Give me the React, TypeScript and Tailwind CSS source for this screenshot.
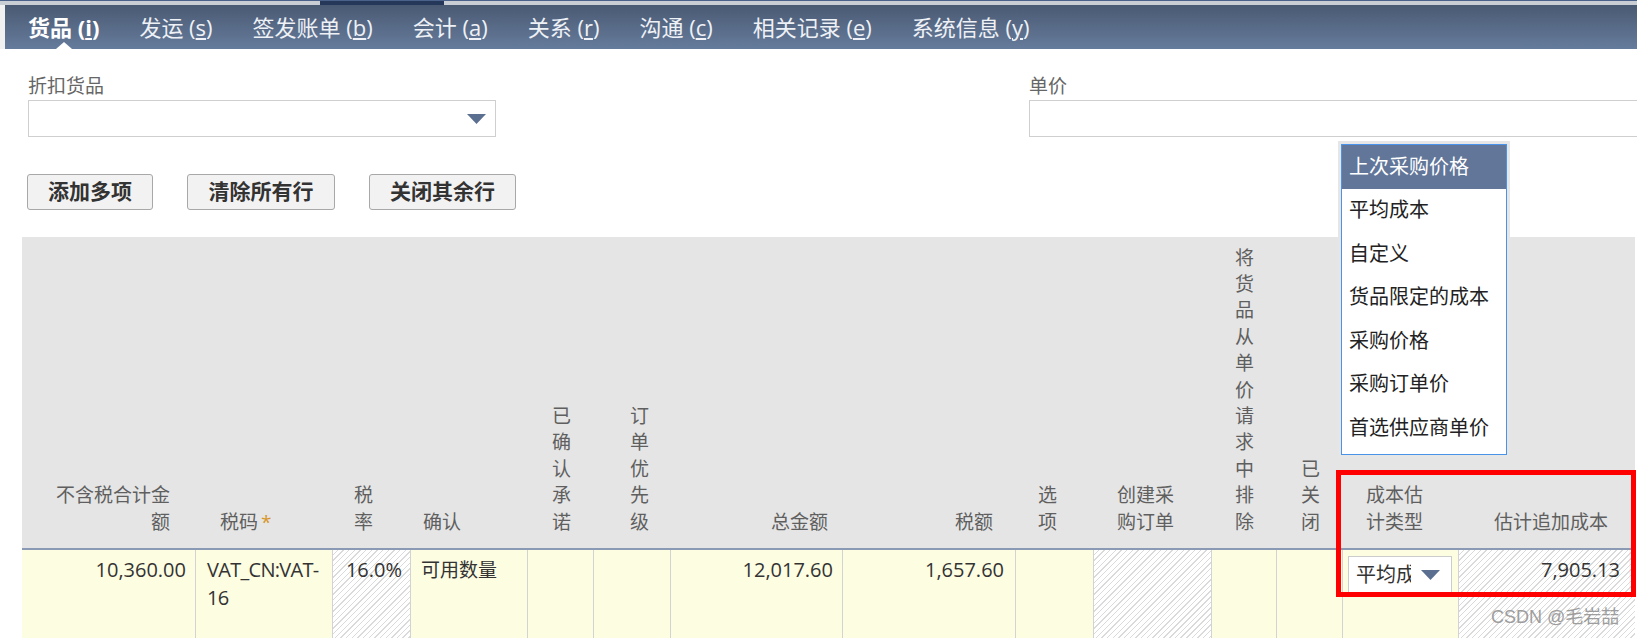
import { FC } from "react";

const tabs = [
  { label: "货品", key: "i", active: true },
  { label: "发运", key: "s" },
  { label: "签发账单", key: "b" },
  { label: "会计", key: "a" },
  { label: "关系", key: "r" },
  { label: "沟通", key: "c" },
  { label: "相关记录", key: "e" },
  { label: "系统信息", key: "y" },
];

const HATCH =
  "bg-[image:repeating-linear-gradient(135deg,#ffffff_0px,#ffffff_3px,#dadada_3px,#dadada_4px)]";

// header lines are broken by hand, the way the form renders them
const columns = [
  { lines: ["不含税合计金", "额"], cls: "items-end pr-[25px] text-right" },
  { lines: ["税码"], cls: "items-start pl-[25px]", req: true },
  { lines: ["税", "率"], cls: "items-start pl-[22px]" },
  { lines: ["确认"], cls: "items-start pl-[13px]" },
  { lines: ["已", "确", "认", "承", "诺"], cls: "items-start pl-[25px]" },
  { lines: ["订", "单", "优", "先", "级"], cls: "items-start pl-[37px]" },
  { lines: ["总金额"], cls: "items-end pr-[14px]" },
  { lines: ["税额"], cls: "items-end pr-[22px]" },
  { lines: ["选", "项"], cls: "items-start pl-[23px]" },
  { lines: ["创建采", "购订单"], cls: "items-start pl-[24px]" },
  {
    lines: ["将", "货", "品", "从", "单", "价", "请", "求", "中", "排", "除"],
    cls: "items-start pl-[24px]",
  },
  { lines: ["已", "关", "闭"], cls: "items-start pl-[25px]" },
  { lines: ["成本估", "计类型"], cls: "items-start pl-[24px]" },
  { lines: ["估计追加成本"], cls: "items-end pr-[27px]" },
];

const costTypes = [
  "上次采购价格",
  "平均成本",
  "自定义",
  "货品限定的成本",
  "采购价格",
  "采购订单价",
  "首选供应商单价",
];

const Caret = ({ className }: { className?: string }) => (
  <svg width="19" height="10" viewBox="0 0 19 10" className={className}>
    <path d="M0 0 H19 L9.5 10 Z" fill="#5b6f90" />
  </svg>
);

const Cell: FC<{ className?: string; children?: React.ReactNode }> = ({ className = "", children }) => (
  <div className={`h-[90px] border-l border-[#d3d3d3] pt-[6px] ${className}`}>{children}</div>
);

export default function App() {
  return (
    <div className="relative h-[638px] w-[1637px] overflow-hidden bg-white font-['Open_Sans','Noto_Sans_CJK_SC',sans-serif]">
      {/* browser strip above the subtabs */}
      <div className="flex h-[5px] border-t border-[#4a628a] bg-[#c9cdd4]">
        <div className="w-[320px]" />
        <div className="h-[4px] w-[124px] bg-[#25385a]" />
      </div>

      {/* subtab bar */}
      <div className="flex bg-[#f1f1f1] pl-[5px]">
        <div className="flex h-[44px] flex-1 items-stretch gap-[40px] bg-linear-to-b from-[#4a5a73] to-[#667c9c] pl-[23px]">
          {tabs.map((t) => (
            <div
              key={t.key}
              className={`relative flex items-center text-[22px] ${
                t.active ? "font-bold text-white" : "text-[#eef1f6]"
              }`}
            >
              <span>
                {t.label} (<u>{t.key}</u>)
              </span>
              {t.active && (
                <div className="absolute bottom-0 left-1/2 h-0 w-0 -translate-x-1/2 border-x-[8px] border-b-[7px] border-x-transparent border-b-white" />
              )}
            </div>
          ))}
        </div>
      </div>

      {/* fields */}
      <div className="mt-[24px] flex pl-[28px]">
        <div className="w-[468px] shrink-0">
          <div className="text-[19px] leading-[26px] text-[#666]">折扣货品</div>
          <div className="mt-px flex h-[37px] items-center justify-end border border-[#cfcfcf] pr-[9px]">
            <Caret />
          </div>
        </div>
        <div className="ml-[533px] w-[700px] shrink-0">
          <div className="text-[19px] leading-[26px] text-[#666]">单价</div>
          <div className="mt-px h-[37px] border border-[#cfcfcf]" />
        </div>
      </div>

      {/* machine buttons */}
      <div className="mt-[37px] flex gap-[34px] pl-[27px]">
        <button className="h-[36px] w-[126px] rounded-[3px] border border-[#a8a8a8] bg-[#f2f2f2] text-[21px] font-bold text-[#333]">
          添加多项
        </button>
        <button className="h-[36px] w-[148px] rounded-[3px] border border-[#a8a8a8] bg-[#f2f2f2] text-[21px] font-bold text-[#333]">
          清除所有行
        </button>
        <button className="h-[36px] w-[147px] rounded-[3px] border border-[#a8a8a8] bg-[#f2f2f2] text-[21px] font-bold text-[#333]">
          关闭其余行
        </button>
      </div>

      {/* item sublist */}
      <div className="ml-[22px] mt-[27px] w-[1613px]">
        <div className="grid h-[311px] grid-cols-[173px_137px_78px_117px_66px_77px_172px_173px_78px_118px_65px_66px_116px_177px] bg-[#e5e5e5]">
          {columns.map((c, i) => (
            <div
              key={i}
              className={`flex flex-col justify-end pb-[13px] text-[19px] leading-[26.4px] text-[#5f5f5f] ${c.cls}`}
            >
              {c.lines.map((l, j) => (
                <span key={j} className="whitespace-nowrap">
                  {l}
                  {c.req && <span className="ml-[3px] align-top text-[#d8962a]">*</span>}
                </span>
              ))}
            </div>
          ))}
        </div>

        <div className="grid grid-cols-[173px_137px_78px_117px_66px_77px_172px_173px_78px_118px_65px_66px_116px_177px] border-t-2 border-[#8a9ab4] bg-[#fdfde2] text-[20px] leading-[28px] text-[#333]">
          <div className="h-[90px] pr-[9px] pt-[6px] text-right">10,360.00</div>
          <Cell className="pl-[11px] tracking-[-0.7px]">
            VAT_CN:VAT-
            <br />
            16
          </Cell>
          <Cell className={`pr-[8px] text-right ${HATCH}`}>16.0%</Cell>
          <Cell className="pl-[10px] text-[19px]">可用数量</Cell>
          <Cell />
          <Cell />
          <Cell className="pr-[9px] text-right">12,017.60</Cell>
          <Cell className="pr-[11px] text-right">1,657.60</Cell>
          <Cell />
          <Cell className={HATCH} />
          <Cell />
          <Cell />
          <Cell className="pl-[5px] pt-[6px]">
            <div className="flex h-[37px] w-[104px] items-center border border-[#cccccc] bg-white">
              <span className="ml-[7px] w-[55px] overflow-hidden whitespace-nowrap">平均成本</span>
              <Caret className="ml-[10px]" />
            </div>
          </Cell>
          <Cell className={`pr-[15px] text-right ${HATCH}`}>7,905.13</Cell>
        </div>
      </div>

      {/* open cost-type dropdown */}
      <div className="absolute left-[1338px] top-[141px] w-[172px] bg-[#e6e6e6] p-[3px]">
        <div className="border border-[#4a93ea] bg-white pb-[4px]">
          {costTypes.map((t, i) => (
            <div
              key={t}
              className={`flex h-[43.5px] items-center pl-[7px] text-[20px] ${
                i === 0 ? "bg-[#617699] text-white" : "text-[#222]"
              }`}
            >
              {t}
            </div>
          ))}
        </div>
      </div>

      {/* annotation */}
      <div className="absolute left-[1336px] top-[470px] h-[127px] w-[300px] border-[5px] border-[#ff0000]" />

      <div className="absolute left-[1491px] top-[604px] font-['Liberation_Sans','Noto_Sans_CJK_SC',sans-serif] text-[18px] text-[#9d9d9d]">
        CSDN @毛岩喆
      </div>
    </div>
  );
}
